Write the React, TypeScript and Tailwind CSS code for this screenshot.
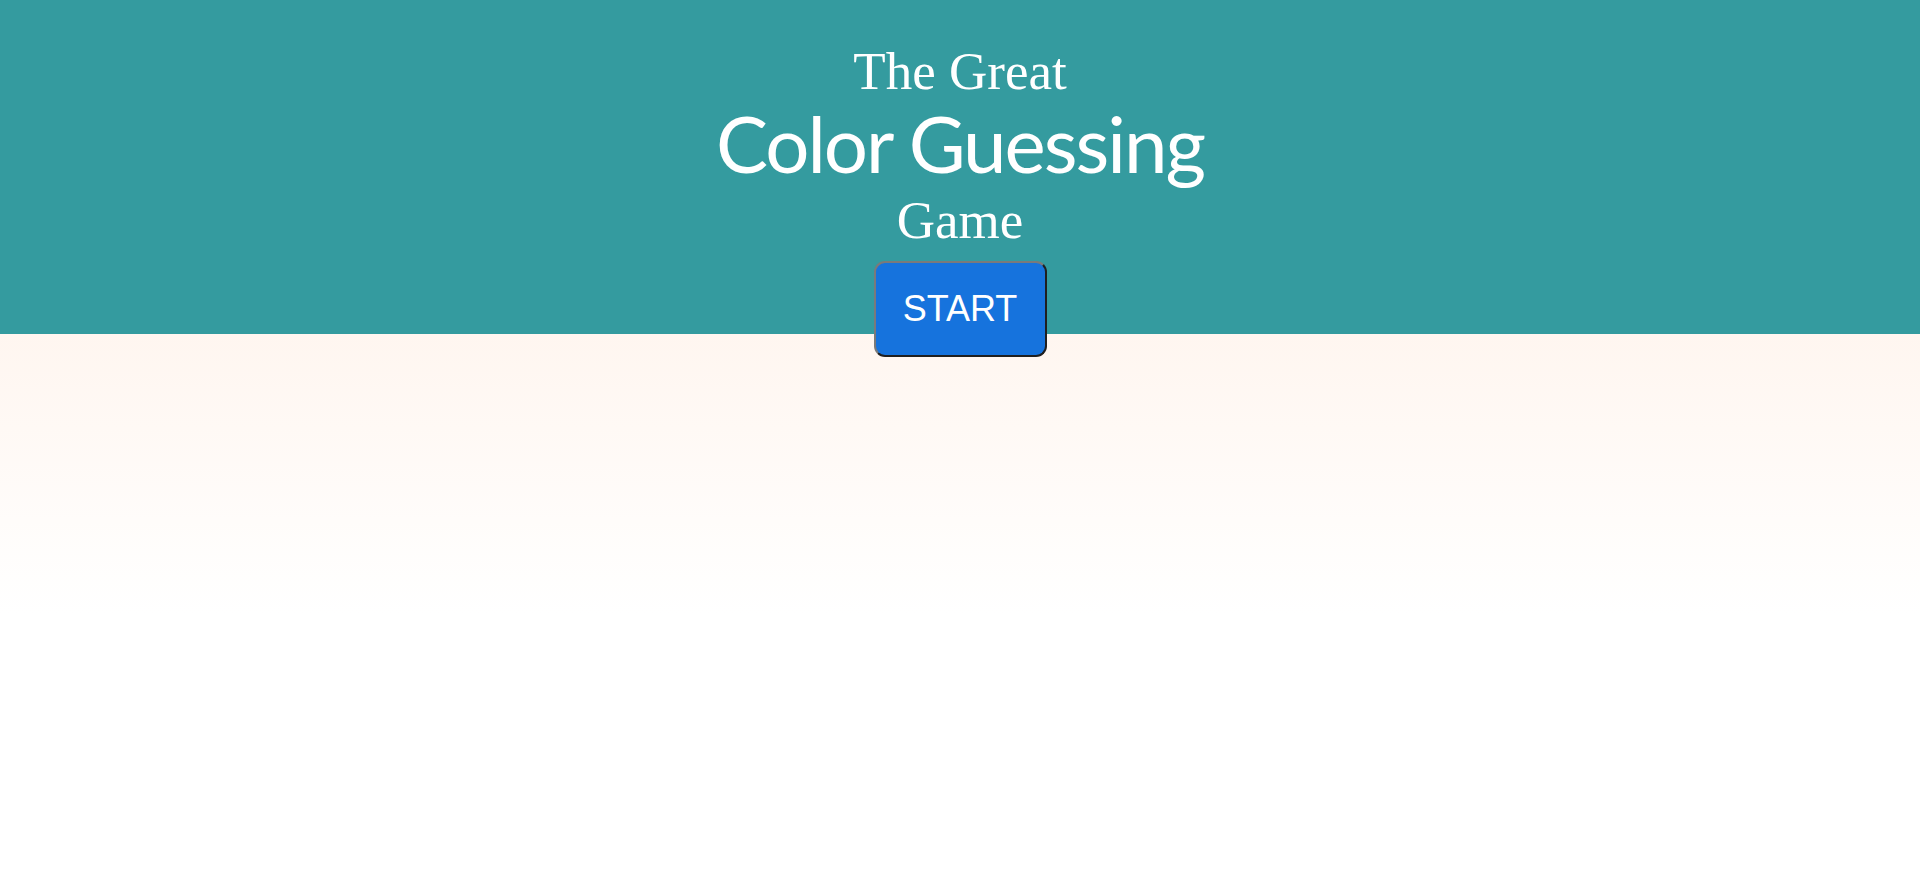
export default function App() {
  return (
    <main className="min-h-[894px] w-full bg-white">
      <header className="flex h-[334px] flex-col items-center bg-[#349b9f] pt-[45px] text-white">
        <h1 className="flex shrink-0 flex-col items-center font-normal">
          <span className="block text-[53px] leading-[53px] [font-family:'Liberation_Serif',serif]">
            The Great
          </span>
          <span className="mb-[6px] block text-[78px] leading-[90px] tracking-[-2px] [font-family:Lato,sans-serif]">
            Color Guessing
          </span>
          <span className="block text-[53px] leading-[53px] [font-family:'Liberation_Serif',serif]">
            Game
          </span>
        </h1>
        <button className="relative z-10 mt-[14px] h-[96px] w-[173px] shrink-0 rounded-[11px] border-2 border-t-[#7a7a7a] border-l-[#7a7a7a] border-r-[#1f1f1f] border-b-[#1f1f1f] bg-[#1673dd] text-[36px] text-white [font-family:'Liberation_Sans',Arial,sans-serif]">
          START
        </button>
      </header>
      <section className="h-[560px] bg-[linear-gradient(to_bottom,#fff6f0,#ffffff_280px)]" />
    </main>
  );
}
